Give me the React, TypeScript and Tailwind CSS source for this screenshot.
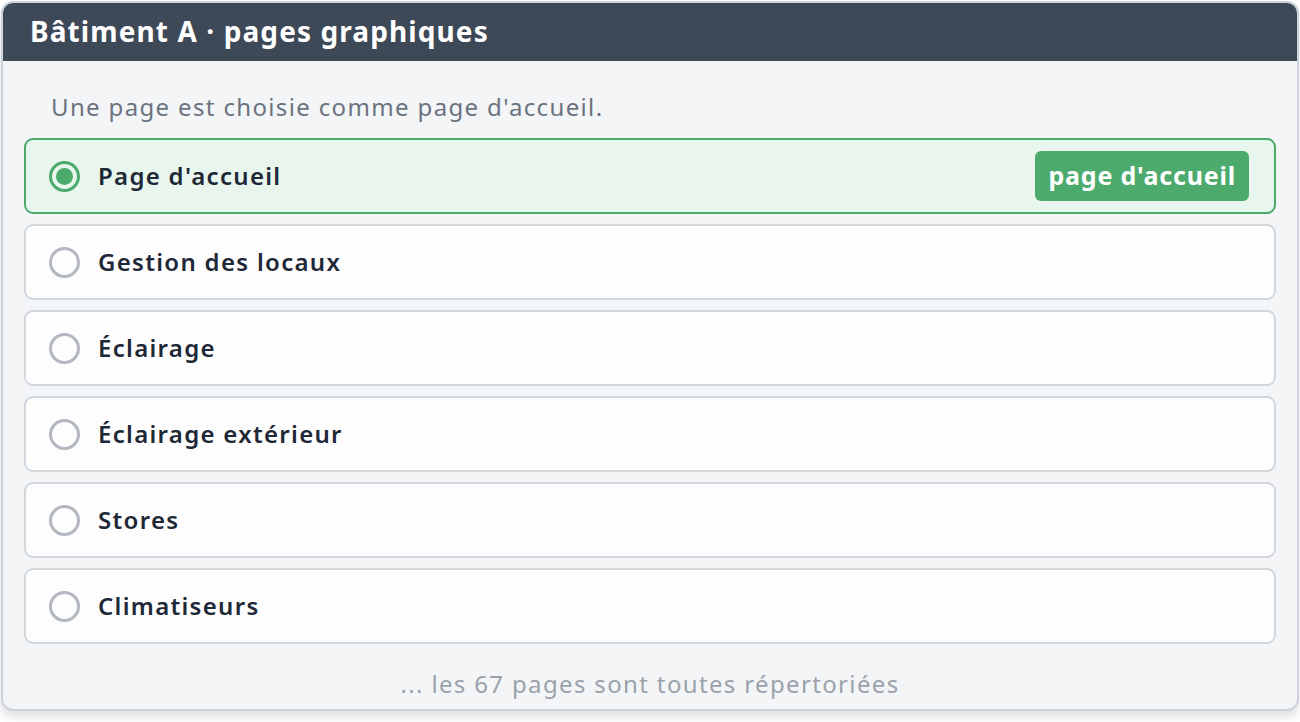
import React from 'react';

const PAGES = [
  { id: 'home', label: "Page d'accueil", home: true },
  { id: 'locaux', label: 'Gestion des locaux' },
  { id: 'eclairage', label: 'Éclairage' },
  { id: 'ext', label: 'Éclairage extérieur' },
  { id: 'stores', label: 'Stores' },
  { id: 'clim', label: 'Climatiseurs' },
];

export default function App() {
  return (
    <div className="w-[1300px] h-[722px] bg-white p-px" style={{ fontFamily: '"Noto Sans", "Open Sans", sans-serif' }}>
      <div className="h-[710px] w-[1298px] rounded-[12px] border-2 border-[#cdd3db] bg-[#f3f5f7] overflow-hidden shadow-[0_6px_10px_rgba(0,0,0,0.12)] flex flex-col">
        {/* header */}
        <div className="h-[58px] shrink-0 bg-[#3d4957] flex items-center px-[27px] pb-[3px]">
          <h1 className="text-[28px] font-bold text-white leading-none tracking-[1.1px]">Bâtiment A · pages graphiques</h1>
        </div>

        <div className="flex-1 flex flex-col px-[21px]">
          <p className="pt-[30px] pb-[15px] pl-[27px] text-[24px] leading-[32px] text-[#6b7380] tracking-[1.35px]">Une page est choisie comme page d'accueil.</p>

          <div className="flex flex-col gap-[10px]">
            {PAGES.map((p) => (
              <label
                key={p.id}
                className={`h-[76px] flex items-center rounded-[9px] border-2 pl-[23px] pr-[25px] ${
                  p.home ? 'border-[#4caa6c] bg-[#e8f6ed]' : 'border-[#d2d7de] bg-[#fdfdfd]'
                }`}
              >
                <span
                  className={`w-[31px] h-[31px] rounded-full border-[3px] flex items-center justify-center shrink-0 ${
                    p.home ? 'border-[#4caa6c]' : 'border-[#b3b8c0]'
                  }`}
                >
                  {p.home && <span className="w-[17px] h-[17px] rounded-full bg-[#4caa6c]" />}
                </span>
                <span className="ml-[18px] text-[24px] font-semibold text-[#1e2836] flex-1 tracking-[1.3px]">{p.label}</span>
                {p.home && (
                  <span className="h-[50px] px-[13px] rounded-[6px] bg-[#4caa6c] text-white text-[25px] font-bold flex items-center tracking-[0.8px]">
                    page d'accueil
                  </span>
                )}
              </label>
            ))}
          </div>

          <p className="mt-[22px] text-center text-[24px] text-[#9ca2ab] tracking-[1.35px]">... les 67 pages sont toutes répertoriées</p>
        </div>
      </div>
    </div>
  );
}
